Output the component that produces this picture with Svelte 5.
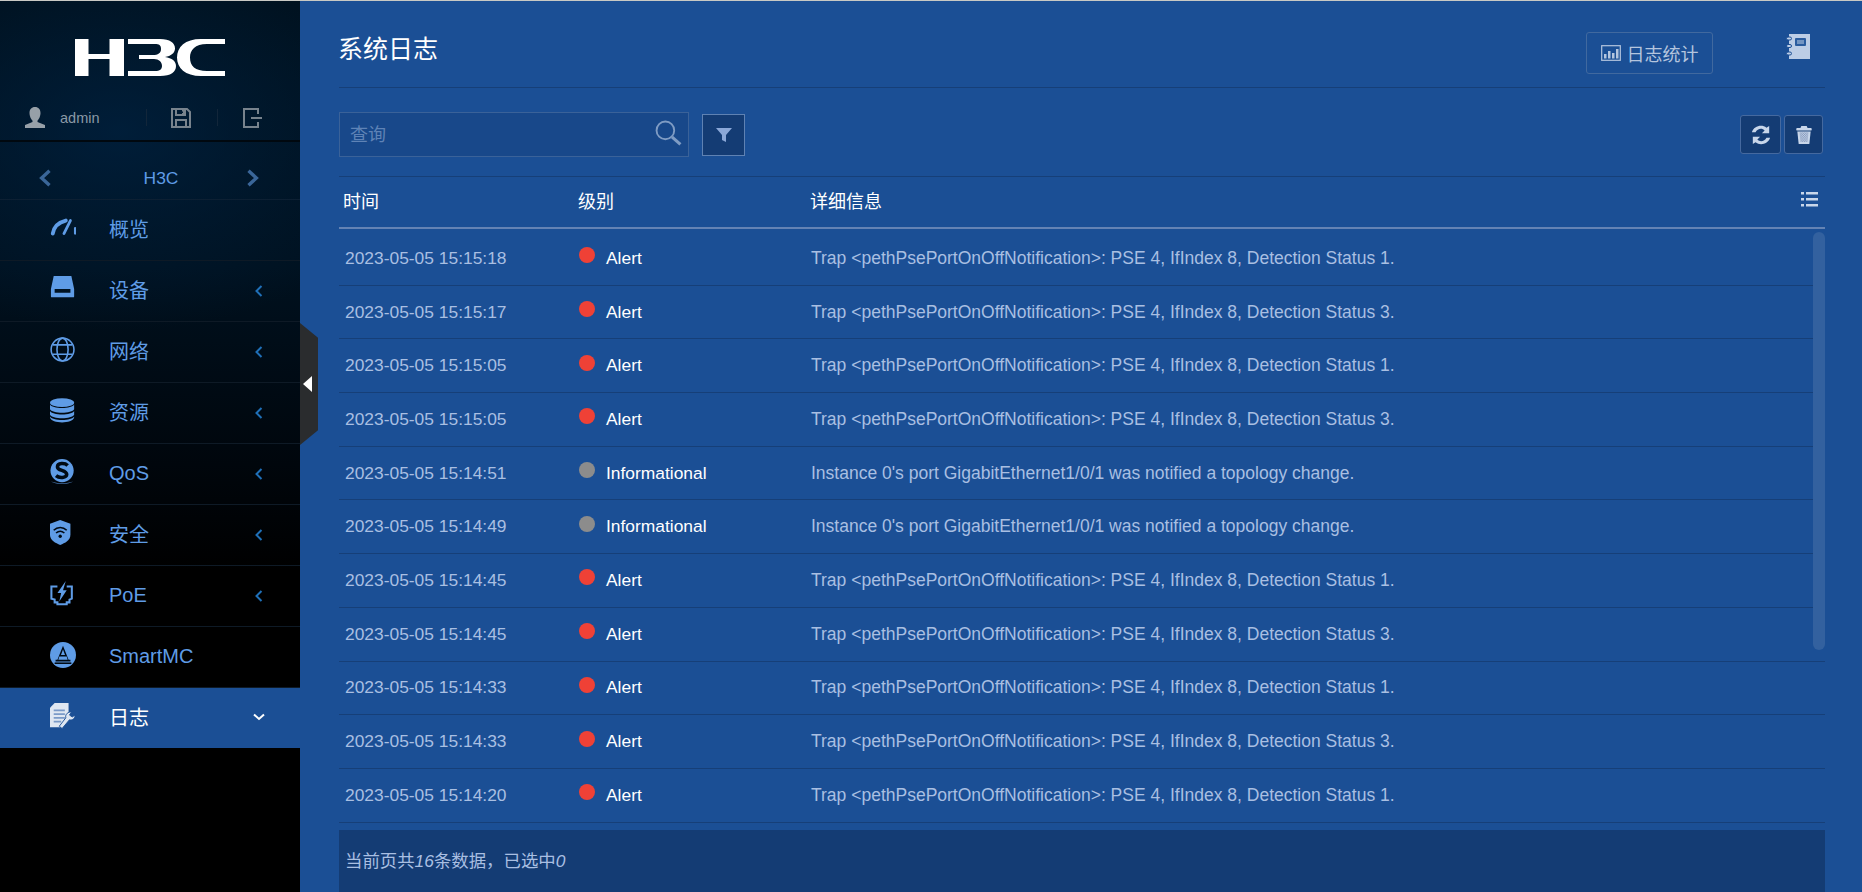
<script>
  const menu = [
    { key: 'gauge', label: '概览' },
    { key: 'drive', label: '设备', arrow: true },
    { key: 'globe', label: '网络', arrow: true },
    { key: 'db', label: '资源', arrow: true },
    { key: 'qos', label: 'QoS', arrow: true, latin: true },
    { key: 'shield', label: '安全', arrow: true },
    { key: 'poe', label: 'PoE', arrow: true, latin: true },
    { key: 'smart', label: 'SmartMC', latin: true }
  ];
  const T1 = 'Trap <pethPsePortOnOffNotification>: PSE 4, IfIndex 8, Detection Status 1.';
  const T3 = 'Trap <pethPsePortOnOffNotification>: PSE 4, IfIndex 8, Detection Status 3.';
  const I = "Instance 0's port GigabitEthernet1/0/1 was notified a topology change.";
  const rows = [
    ['2023-05-05 15:15:18', 'Alert', T1],
    ['2023-05-05 15:15:17', 'Alert', T3],
    ['2023-05-05 15:15:05', 'Alert', T1],
    ['2023-05-05 15:15:05', 'Alert', T3],
    ['2023-05-05 15:14:51', 'Informational', I],
    ['2023-05-05 15:14:49', 'Informational', I],
    ['2023-05-05 15:14:45', 'Alert', T1],
    ['2023-05-05 15:14:45', 'Alert', T3],
    ['2023-05-05 15:14:33', 'Alert', T1],
    ['2023-05-05 15:14:33', 'Alert', T3],
    ['2023-05-05 15:14:20', 'Alert', T1]
  ];
</script>

{#snippet icon(key)}
  <svg class="micon" viewBox="0 0 28 28" aria-hidden="true">
    {#if key === 'gauge'}
      <g class="line round">
        <path stroke-width="4.200" d="M3 20C4 13 9 8 17 6" />
        <path stroke-width="3" d="M15 20L22 6" />
        <path stroke-width="2.400" d="M27 14v6" />
      </g>
    {:else if key === 'drive'}
      <path fill-rule="evenodd" d="M4 0h19l3 14v8a1 1 0 0 1-1 1H2a1 1 0 0 1-1-1v-8zM5 14v4h17v-4z" />
    {:else if key === 'globe'}
      <g class="line" stroke-width="1.700">
        <circle cx="13.500" cy="13.500" r="12.300" />
        <ellipse cx="13.500" cy="13.500" rx="6" ry="12.300" />
        <path d="M3 8.500h21M3 18.500h21" />
      </g>
    {:else if key === 'db'}
      <ellipse cx="13" cy="5" rx="13" ry="4.800" />
      <path d="M0 7c2 5 24 5 26 0v5c-2 5-24 5-26 0z" />
      <path d="M0 14c2 5 24 5 26 0v4c-2 5-24 5-26 0z" />
      <path d="M0 20c2 5 24 5 26 0v1c-2 7-24 7-26 0z" />
    {:else if key === 'qos'}
      <circle cx="13" cy="12.500" r="12.500" />
      <path class="cutline" stroke-width="3.800" d="M19 7C16 4 8 4 8 8.500C8 13 18 11.500 18 16.500C18 20.500 10 21 6.500 18" />
      <path d="M1 24c6 3 18 3 24 0-5 4-19 4-24 0z" />
    {:else if key === 'shield'}
      <path d="M11 0l11 4v12c0 6-6 9-11 11C6 25 0 22 0 16V4z" />
      <g class="cutline" stroke-width="1.700">
        <path d="M4 11c4-4 10-4 14 0M6.500 14c3-2.500 6-2.500 9 0" />
      </g>
      <circle class="cut" cx="11" cy="17.500" r="1.800" />
    {:else if key === 'poe'}
      <path class="line" stroke-width="2.200" d="M8 6H1.500v13l3.500 1v3h3v2h10v-2h3v-3l2.500-1V6H18" />
      <path d="M17 0l-9 13h4l-2 9 8-12h-4z" />
    {:else if key === 'smart'}
      <circle cx="14" cy="14" r="14" />
      <path class="cut" d="M14 4l-6 15H6v2h16v-2h-2zM14 8l2.200 6h-4.400zM10 15.500h8l1 3.500H9z" />
      <rect class="cut" x="5" y="22" width="18" height="1.700" />
    {:else if key === 'log'}
      <path class="white" d="M0 5l5-5h15v15l-9 11H0z" />
      <path class="bars" d="M4 7h12v2H4zM4 11h12v2H4zM4 15h12v2H4zM4 19h8v2H4z" />
      <path class="white outlined" d="M10 25l3 2.500 8-9.500c3 1 6-1 6-5l-3 2-3-2 2-3c-3-1-7 2-6 6z" />
    {/if}
  </svg>
{/snippet}

<div class="page">
  <aside class="side">
    <div class="logo-row">
      <svg class="logo" viewBox="0 0 150 37" aria-label="H3C">
        <path d="M0 0h13.500v15h21V0H49v37H34.500V20h-21v17H0z" />
        <path d="M53 0H85C95 0 100 4 100 9.500C100 14 96 17 90 18C97 19 101 22 101 27C101 33 96 37 85 37H53V32H80C85 32 87 30 87 27C87 23 84 20 79 20H64V16H78C83 16 86 14 86 10C86 6 84 5 80 5H53z" />
        <path d="M150 0V5H132C120 5 115 11 115 18.500C115 27 120 32 132 32H150V37H126C110 37 102 29 102 18.500C102 8 110 0 126 0z" />
      </svg>
    </div>
    <div class="user-row">
      <svg class="uicon user" viewBox="0 0 20 21"><path d="M10 0c3.500 0 5.500 2.500 5.500 6S13.500 13 12.500 13.500v1.500L20 18v3H0v-3l7.500-3v-1.500C6.500 13 4.500 9.500 4.500 6S6.500 0 10 0z" /></svg>
      <span class="uname">admin</span>
      <i class="usep first"></i>
      <svg class="uicon save" viewBox="0 0 20 20"><path d="M1 1h15l3 3v15H1zM5 1v6h9V1M11 2.500h2V6h-2M5 19v-7h10v7" /></svg>
      <i class="usep"></i>
      <svg class="uicon exit" viewBox="0 0 20 20"><path d="M15 6V1H1v18h14v-5M8 10h11" /></svg>
    </div>
    <div class="dev-row">
      <svg class="devchev" viewBox="0 0 12 16"><path d="M10 1.500L3 8l7 6.500" /></svg>
      <span>H3C</span>
      <svg class="devchev" viewBox="0 0 12 16"><path d="M2 1.500L9 8l-7 6.500" /></svg>
    </div>
    <nav class="menu">
      {#each menu as m}
        <div class="item">
          <span class="icwrap">{@render icon(m.key)}</span>
          <span class="label" class:latin={m.latin}>{m.label}</span>
          {#if m.arrow}
            <svg class="chev" viewBox="0 0 8 12"><path d="M6.500 1L1.500 6l5 5" /></svg>
          {/if}
        </div>
      {/each}
      <div class="item active">
        <span class="icwrap">{@render icon('log')}</span>
        <span class="label">日志</span>
        <svg class="chev down" viewBox="0 0 12 8"><path d="M1 1.500l5 4.500 5-4.500" /></svg>
      </div>
    </nav>
    <div class="handle"><i></i></div>
  </aside>

  <main class="main">
    <header class="head">
      <h1>系统日志</h1>
      <button class="stat">
        <svg viewBox="0 0 20 16"><rect x=".7" y=".7" width="18.600" height="14.600" fill="none" stroke="currentColor" stroke-width="1.200" /><path fill="currentColor" d="M3 9h2.500v4.500H3zM7 6h2.500v7.500H7zM11 8h2.500v5.500H11zM15 4h2.500v9.500H15z" /></svg>
        日志统计
      </button>
      <svg class="notebook" viewBox="0 0 24 25">
        <path fill="#bccde6" d="M3 0h21v25H3z" />
        <rect x="9" y="4" width="11" height="8" rx="1" fill="#2a5c9f" />
        <path fill="#bccde6" d="M11 6.500h7v1h-7zM11 8.500h7v1h-7z" />
        <g fill="#bccde6" stroke="#1b4f95" stroke-width="1"><rect x=".5" y="3" width="5" height="3" rx="1.500" /><rect x=".5" y="10.500" width="5" height="3" rx="1.500" /><rect x=".5" y="18" width="5" height="3" rx="1.500" /></g>
      </svg>
    </header>

    <div class="tools">
      <div class="search">
        <span>查询</span>
        <svg viewBox="0 0 26 26"><circle cx="10" cy="10" r="8.500" fill="none" stroke="#7f9cc4" stroke-width="1.800" /><path d="M16.500 16.500l8 7" stroke="#7f9cc4" stroke-width="3" fill="none" /></svg>
      </div>
      <button class="filter"><svg viewBox="0 0 16 14"><path d="M0 0h16l-6 7v7l-4-2V7z" /></svg></button>
      <span class="grow"></span>
      <div class="acts">
        <button class="act refresh">
          <svg viewBox="0 0 24 22"><path fill="#c8d6ea" d="M21 1v8h-8l3-3c-3-3-8-2-10 2H2C4 1 13-1 18 3zM3 21v-8h8l-3 3c3 3 8 2 10-2h4c-2 7-11 9-16 5z" /></svg>
        </button>
        <button class="act trash">
          <svg viewBox="0 0 18 20">
            <defs>
              <pattern id="mesh" width="2" height="2" patternUnits="userSpaceOnUse"><rect width="2" height="2" fill="#c8d6ea" /><rect width="1" height="1" fill="#7f93b8" /><rect x="1" y="1" width="1" height="1" fill="#7f93b8" /></pattern>
            </defs>
            <path fill="#c8d6ea" d="M6 0h6l1 2h4c1 0 1 3 0 3H1C0 5 0 2 1 2h4z" />
            <path fill="#c8d6ea" d="M1.500 6h15L15 20H3z" />
            <path fill="url(#mesh)" d="M4 7h10l-1 11H5z" />
          </svg>
        </button>
      </div>
    </div>

    <div class="thead">
      <span class="c1">时间</span>
      <span class="c2">级别</span>
      <span class="c3">详细信息</span>
      <svg class="cols" viewBox="0 0 17 15"><path d="M0 0h3v2.500H0zM5 0h12v2.500H5zM0 6h3v2.500H0zM5 6h12v2.500H5zM0 12h3v2.500H0zM5 12h12v2.500H5z" /></svg>
    </div>

    <div class="tbody">
      <div class="thumb"></div>
      {#each rows as r}
        <div class="row">
          <span class="c1 time">{r[0]}</span>
          <span class="c2 level">
            <i class="dot" class:info={r[1] !== 'Alert'}></i>
            {r[1]}
          </span>
          <span class="c3 detail">{r[2]}</span>
        </div>
      {/each}
    </div>

    <footer class="foot">当前页共<em>16</em>条数据，已选中<em>0</em></footer>
  </main>
</div>

<style>
  :global(body) { margin: 0; background: #1b4f95; overflow: hidden; }
  .page {
    display: flex;
    width: 1862px;
    height: 892px;
    overflow: hidden;
    border-top: 1px solid #c9c9c4;
    box-sizing: border-box;
    font-family: "Liberation Sans", "Noto Sans CJK SC", sans-serif;
  }
  .side {
    position: relative;
    flex: 0 0 300px;
    background:
      radial-gradient(ellipse 300px 200px at 120px 130px, rgba(0, 34, 66, .75), rgba(0, 34, 66, 0)),
      linear-gradient(180deg, #00101c 0%, #00111f 30%, #00070e 50%, #000 64%);
    display: flex;
    flex-direction: column;
  }
  .logo-row { height: 102px; display: flex; justify-content: center; box-sizing: border-box; padding-top: 38px; }
  .logo { width: 150px; height: 37px; fill: #fff; }
  .user-row {
    height: 39px;
    display: flex;
    align-items: center;
    box-sizing: border-box;
    padding: 0 0 8px 25px;
    border-bottom: 2px solid #00080f;
  }
  .uicon { display: block; }
  .user { width: 20px; height: 21px; fill: #97a0a8; }
  .uname { margin-left: 15px; font-size: 14.500px; color: #8a99a6; width: 86px; }
  .usep { width: 1px; height: 17px; background: #12263a; }
  .save, .exit { fill: none; stroke: #78838d; stroke-width: 2; width: 20px; height: 20px; }
  .save { margin-left: 24px; margin-right: 26px; }
  .exit { margin-left: 25px; }
  .dev-row {
    height: 58px;
    display: flex;
    align-items: center;
    justify-content: space-between;
    box-sizing: border-box;
    padding: 14px 40px 0 38px;
    border-bottom: 1px solid #0d2033;
    color: #5f9ce6;
    font-size: 17.400px;
  }
  .dev-row span { margin: 2px 0 0 24px; }
  .devchev { width: 14px; height: 18px; fill: none; stroke: #3a6699; stroke-width: 3; }
  .menu { display: flex; flex-direction: column; }
  .item {
    height: 61px;
    display: flex;
    align-items: center;
    box-sizing: border-box;
    padding-bottom: 4px;
    border-bottom: 1px solid #0e1a26;
    color: #5f9ce6;
    font-size: 20px;
  }
  .icwrap { width: 109px; padding-left: 50px; box-sizing: border-box; display: flex; }
  .micon { width: 26px; height: 26px; fill: #5f9ce6; flex: none; }
  .micon .line { fill: none; stroke: #5f9ce6; }
  .micon .round { stroke-linecap: round; }
  .micon .cut { fill: #000a14; }
  .micon .cutline { fill: none; stroke: #000a14; }
  .label { flex: 1; }
  .label.latin { padding-top: 2px; }
  .chev { width: 8px; height: 12px; margin: 4px 37px 0 0; fill: none; stroke: #1f70b8; stroke-width: 2; }
  .item.active { background: #1b4f95; border-bottom: none; color: #fff; height: 60px; }
  .item.active .micon { fill: #dfe7f2; }
  .item.active .white { fill: #dfe7f2; }
  .item.active .bars { fill: #7a9ac8; }
  .item.active .outlined { stroke: #1b4f95; stroke-width: 1; }
  .chev.down { width: 12px; height: 8px; margin: 2px 35px 0 0; stroke: #fff; }
  .handle {
    position: absolute;
    left: 300px;
    top: 322px;
    width: 18px;
    height: 122px;
    background: #2a2c2e;
    clip-path: polygon(0 0, 100% 12%, 100% 88%, 0 100%);
    display: flex;
    align-items: center;
    justify-content: center;
  }
  .handle i {
    width: 0; height: 0;
    border-style: solid;
    border-width: 8px 9px 8px 0;
    border-color: transparent #fff transparent transparent;
    margin-right: 3px;
  }
  .main { flex: 1; padding: 0 37px 0 39px; min-width: 0; background: #1b4f95; display: flex; flex-direction: column; }
  .head {
    height: 87px;
    flex: none;
    display: flex;
    align-items: flex-start;
    box-sizing: border-box;
    border-bottom: 1px solid #163f78;
    position: relative;
  }
  h1 { margin: 31px 0 0 -1px; font-size: 25px; line-height: 34px; font-weight: 400; color: #fff; flex: 1; }
  .stat {
    margin-top: 31px;
    margin-right: 73px;
    width: 127px;
    height: 42px;
    border: 1px solid #41699f;
    border-radius: 3px;
    background: transparent;
    color: #b4c5de;
    font: inherit;
    font-size: 18px;
    display: flex;
    align-items: center;
    justify-content: center;
    gap: 6px;
    padding: 0;
  }
  .stat svg { width: 20px; height: 16px; }
  .notebook { width: 24px; height: 25px; margin-top: 33px; margin-right: 15px; }
  .tools { height: 89px; flex: none; display: flex; align-items: flex-start; box-sizing: border-box; border-bottom: 1px solid #163f78; }
  .search {
    margin-top: 24px;
    width: 350px;
    height: 45px;
    box-sizing: border-box;
    border: 1px solid #3a6299;
    background: #18488a;
    display: flex;
    align-items: center;
    justify-content: space-between;
    padding: 0 6px 3px 10px;
    color: #5f83b6;
    font-size: 18px;
  }
  .search svg { width: 27px; height: 27px; }
  .filter {
    margin: 26px 0 0 13px;
    width: 43px;
    height: 42px;
    border: 1px solid #5f82b3;
    background: #143c74;
    padding: 0;
    display: flex;
    align-items: center;
    justify-content: center;
  }
  .filter svg { width: 16px; height: 16px; fill: #8ba8d8; }
  .grow { flex: 1; }
  .acts { display: flex; gap: 3px; margin-top: 27px; margin-right: 2px; }
  .act {
    height: 39px;
    border: 1px solid #45699f;
    border-radius: 3px;
    background: #143c74;
    padding: 0;
    display: flex;
    align-items: center;
    justify-content: center;
  }
  .refresh { width: 41px; }
  .trash { width: 39px; }
  .refresh svg { width: 22px; height: 20px; }
  .trash svg { width: 16px; height: 18px; }
  .thead {
    flex: none;
    height: 52px;
    display: flex;
    align-items: center;
    box-sizing: border-box;
    padding-bottom: 4px;
    border-bottom: 2px solid #6483b4;
    color: #fff;
    font-size: 18px;
    position: relative;
  }
  .c1 { width: 239px; padding-left: 4px; box-sizing: border-box; flex: none; }
  .c2 { width: 232px; flex: none; box-sizing: border-box; }
  .c3 { flex: 1; }
  .cols { position: absolute; right: 7px; top: 15px; width: 17px; height: 15px; fill: #c8d6ea; }
  .tbody { position: relative; flex: none; padding-top: 3px; }
  .thumb { position: absolute; right: 0; top: 3px; width: 12px; height: 418px; border-radius: 6px; background: #33619f; }
  .row {
    height: 53.700px;
    display: flex;
    align-items: center;
    box-sizing: border-box;
    border-bottom: 1px solid #163f78;
    font-size: 17.400px;
  }
  .time { padding-left: 6px; color: #a9bfe2; }
  .level { display: flex; align-items: center; color: #fff; }
  .detail { color: #a9bfe2; padding-left: 1px; font-size: 17.500px; }
  .dot { width: 16px; height: 16px; border-radius: 50%; background: #ef4136; margin: -6px 11px 0 1px; flex: none; }
  .dot.info { background: #8c8c8c; }
  .foot {
    margin-top: 7px;
    flex: 1;
    background: #143c74;
    color: #a9bfe2;
    font-size: 17.400px;
    padding: 17px 0 0 6px;
    box-sizing: border-box;
  }
  .foot em { font-style: italic; }
</style>
